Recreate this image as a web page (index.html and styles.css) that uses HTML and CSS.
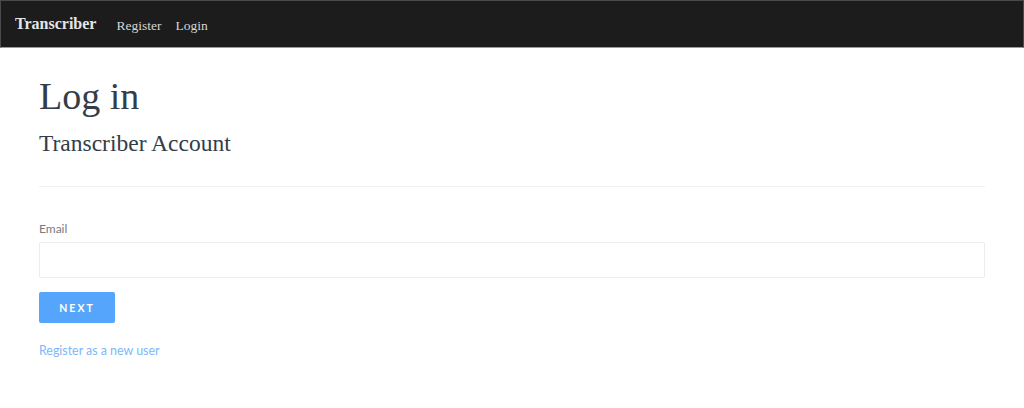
FILE: index.html
```html
<!DOCTYPE html>
<html lang="en">
<head>
<meta charset="utf-8">
<title>Log in - Transcriber</title>
<link rel="stylesheet" href="styles.css">
</head>
<body>
<nav class="navbar">
  <a class="brand" href="#">Transcriber</a>
  <ul class="nav">
    <li><a href="#">Register</a></li>
    <li><a href="#">Login</a></li>
  </ul>
</nav>
<main class="container">
  <h1 class="title">Log in</h1>
  <h2 class="subtitle">Transcriber Account</h2>
  <hr class="rule">
  <form class="form">
    <label class="label" for="email">Email</label>
    <input class="input" id="email" type="email">
    <button class="btn" type="button">Next</button>
  </form>
  <a class="link" href="#">Register as a new user</a>
</main>
</body>
</html>
```
FILE: styles.css
```css
* { box-sizing: border-box; }
html, body { margin: 0; padding: 0; background: #fff; }
body { font-family: Lato, "Liberation Sans", sans-serif; color: #333; }
.navbar {
  height: 48px;
  background: #1c1c1c;
  border: 1px solid #4a4a4a;
  border-bottom: 1px solid #9a9a9a;
  display: flex;
  align-items: center;
  padding: 0 14px;
}
.brand {
  font-family: "Liberation Serif", "DejaVu Serif", serif;
  font-weight: bold;
  font-size: 16px;
  color: #e6e6e6;
  text-decoration: none;
  margin-right: 20px;
}
.nav { list-style: none; margin: 0; padding: 0; display: flex; gap: 14px; }
.nav a {
  font-family: "Liberation Serif", "DejaVu Serif", serif;
  font-size: 13.5px;
  color: #d6d6d6;
  text-decoration: none;
}
.container { padding: 0 39px; }
.title {
  font-family: "Liberation Serif", "DejaVu Serif", serif;
  font-weight: normal;
  font-size: 38px;
  line-height: 44px;
  color: #333d49;
  margin: 26px 0 0;
}
.subtitle {
  font-family: "Liberation Serif", "DejaVu Serif", serif;
  font-weight: normal;
  font-size: 23.5px;
  line-height: 28px;
  color: #333d49;
  margin: 11px 0 0;
}
.rule { border: 0; border-top: 1px solid #f0f0f0; margin: 29px 0 0; }
.form { display: flex; flex-direction: column; align-items: flex-start; margin-top: 34px; }
.label { font-size: 12px; color: #7a7a7a; line-height: 16px; }
.input {
  margin-top: 5px;
  width: 100%;
  height: 36px;
  border: 1px solid #ececec;
  border-radius: 2px;
  background: #fff;
}
.btn {
  margin-top: 14px;
  width: 76px;
  height: 31px;
  border: 0;
  border-radius: 2px;
  background: #55a5fd;
  color: #fff;
  font-family: Lato, "Liberation Sans", sans-serif;
  font-weight: bold;
  font-size: 10.5px;
  letter-spacing: 2px;
  text-transform: uppercase;
}
.link {
  display: inline-block;
  margin-top: 20px;
  font-size: 12.4px;
  line-height: 16px;
  color: #7ab7fb;
  text-decoration: none;
}
```
